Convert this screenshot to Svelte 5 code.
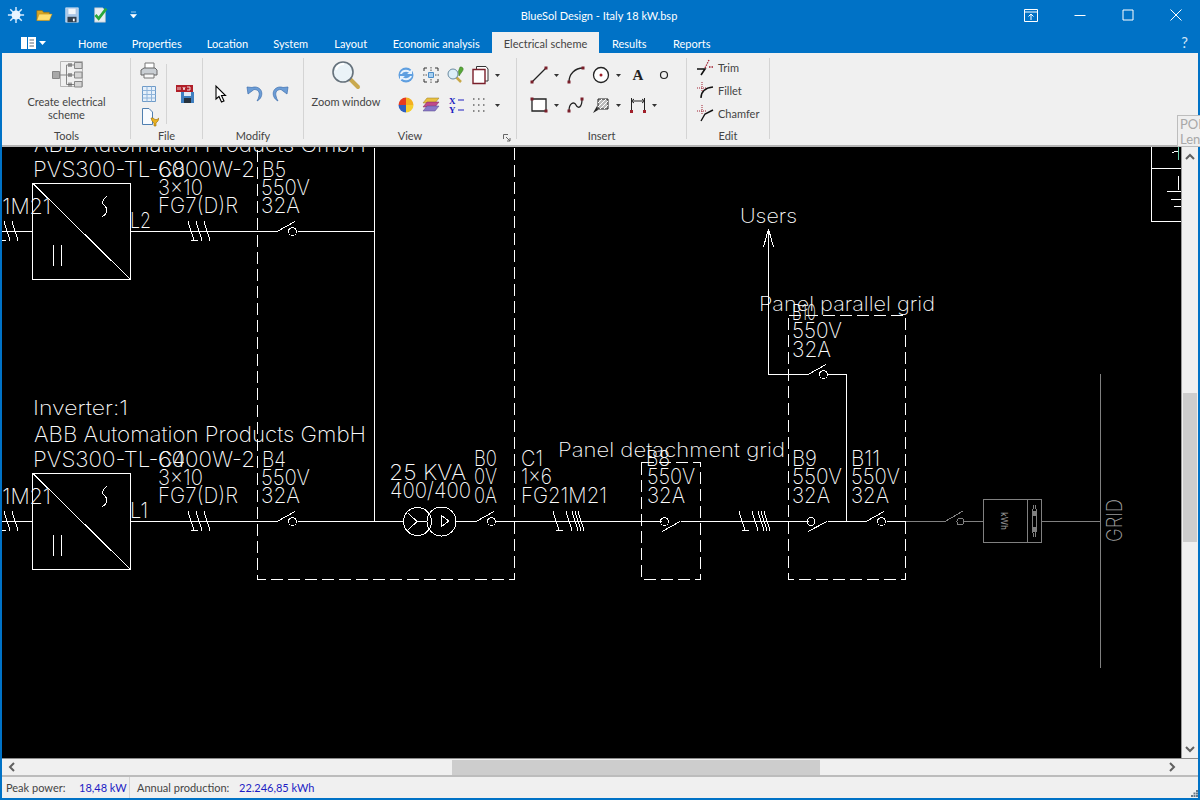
<script>
  const tabs = [
    { label: "Home", w: 52.5 },
    { label: "Properties", w: 75.5 },
    { label: "Location", w: 66 },
    { label: "System", w: 60.5 },
    { label: "Layout", w: 59.5 },
    { label: "Economic analysis", w: 111.5 },
    { label: "Electrical scheme", w: 107, active: true },
    { label: "Results", w: 60.5 },
    { label: "Reports", w: 64.5 },
  ];

  // x, baseline, width, font size, text (coordinates are page pixels)
  const labels = [
    [34, 152, 332, 21, "ABB Automation Products GmbH"],
    [33, 177, 222, 22, "PVS300-TL-6000W-2"],
    [158, 177, 27, 22, "C8"],
    [158, 195, 45, 22, "3x10"],
    [158, 213, 80, 22, "FG7(D)R"],
    [262, 177, 24, 22, "B5"],
    [261, 195, 49, 22, "550V"],
    [261, 213, 39, 22, "32A"],
    [-11, 214, 62, 22, "21M21"],
    [130, 228, 21, 22, "L2"],
    [33, 415, 95, 20, "Inverter:1"],
    [34, 442, 332, 21, "ABB Automation Products GmbH"],
    [33, 467, 222, 22, "PVS300-TL-6000W-2"],
    [158, 467, 27, 22, "C4"],
    [158, 485, 45, 22, "3x10"],
    [158, 503, 80, 22, "FG7(D)R"],
    [262, 467, 24, 22, "B4"],
    [261, 485, 49, 22, "550V"],
    [261, 503, 39, 22, "32A"],
    [-11, 504, 62, 22, "21M21"],
    [130, 518, 18, 22, "L1"],
    [389, 480, 77, 22, "25 KVA"],
    [390, 498, 81, 22, "400/400"],
    [474, 466, 23, 22, "B0"],
    [474, 484, 23, 22, "0V"],
    [474, 503, 23, 22, "0A"],
    [521, 466, 22, 22, "C1"],
    [521, 484, 31, 22, "1x6"],
    [521, 503, 86, 22, "FG21M21"],
    [558, 457, 227, 20, "Panel detachment grid"],
    [646, 466, 24, 22, "B8"],
    [647, 484, 48, 22, "550V"],
    [647, 503, 38, 22, "32A"],
    [792, 466, 25, 22, "B9"],
    [792, 484, 50, 22, "550V"],
    [792, 503, 38, 22, "32A"],
    [851, 466, 29, 22, "B11"],
    [851, 484, 49, 22, "550V"],
    [851, 503, 38, 22, "32A"],
    [740, 223, 57, 20, "Users"],
    [759, 311, 176, 20, "Panel parallel grid"],
    [792, 320, 24, 22, "B10"],
    [792, 338, 50, 22, "550V"],
    [792, 357, 39, 22, "32A"],
  ];

  // straight wires as x1 y1 x2 y2
  const wires = [
    [0, 231, 32, 231],
    [130, 231, 277, 231],
    [297, 231, 374, 231],
    [374, 147, 374, 521],
    [0, 521, 32, 521],
    [130, 521, 277, 521],
    [297, 521, 403, 521],
    [456, 521, 476, 521],
    [495, 521, 661, 521],
    [680, 521, 808, 521],
    [827, 521, 866, 521],
    [886, 521, 905, 521],
    [768, 230, 768, 374],
    [768, 374, 808, 374],
    [827, 374, 846, 374],
    [846, 374, 846, 521],
  ];

  const breakers = [
    { x: 277, y: 231 },
    { x: 277, y: 521 },
    { x: 476, y: 521 },
    { x: 808, y: 374 },
    { x: 866, y: 521 },
  ];

  const boxes = [32, 322];
  const cableTicks = [
    { x: 188, y: 231, offs: [0, 8, 16] },
    { x: 188, y: 521, offs: [0, 8, 16] },
    { x: -4, y: 231, offs: [0, 8, 16] },
    { x: -4, y: 521, offs: [0, 8, 16] },
    { x: 553, y: 521, offs: [0, 13, 19, 22, 25] },
    { x: 739, y: 521, offs: [0, 13, 19, 22, 25] },
  ];

  function tickPath(offs) {
    let d = "M3 9.5H10";
    for (const dx of offs) {
      d += `M${dx} -9.5L${dx + 6} 9.5`;
    }
    return d;
  }
</script>

<div class="window">
  <header class="titlebar">
    <div class="quick">
      <svg class="q" viewBox="0 0 20 20">
        <g stroke="#d8ecff" stroke-width="1.6"><path d="M10 1V19M1 10H19M3.6 3.6L16.4 16.4M16.4 3.6L3.6 16.4" /></g>
        <circle cx="10" cy="10" r="5" fill="#e9f4ff" />
      </svg>
      <svg class="q" viewBox="0 0 20 20">
        <path d="M2 5H8L9.5 7H16V16H2Z" fill="#d9a520" stroke="#8a6510" stroke-width=".6" />
        <path d="M4.5 9H19L16 16H2Z" fill="#ffdf70" stroke="#b58a20" stroke-width=".6" />
      </svg>
      <svg class="q" viewBox="0 0 20 20">
        <path d="M3 2H17V18H3Z" fill="#a9c6e6" stroke="#e4eef8" stroke-width=".7" />
        <path d="M6 3H14V9H6Z" fill="#f2f6fa" />
        <path d="M5 12H15V18H5Z" fill="#33404e" />
        <path d="M11 14H13V17H11Z" fill="#fff" />
      </svg>
      <svg class="q" viewBox="0 0 20 20">
        <path d="M4 2H13L16 5V18H4Z" fill="#e8eef3" stroke="#a8b8c4" stroke-width=".7" />
        <path d="M5 10L8.5 14L17 3" fill="none" stroke="#2aa83c" stroke-width="3" />
      </svg>
      <svg class="qmore" viewBox="0 0 7 8"><path d="M1 1H6M0.5 3.5H6.5L3.5 7Z" fill="#fff" stroke="#fff" stroke-width=".6" /></svg>
    </div>
    <div class="title">BlueSol Design - Italy 18 kW.bsp</div>
    <div class="controls">
      <svg viewBox="0 0 14 13" class="ctl-pin"><path d="M.5 .5H13.5V12.5H.5ZM.5 3H13.5M7 11V5M4.5 7.5L7 5L9.5 7.5" fill="none" stroke="#fff" /></svg>
      <svg viewBox="0 0 12 12" class="ctl"><path d="M.5 6.5H11.5" stroke="#fff" /></svg>
      <svg viewBox="0 0 12 12" class="ctl"><path d="M1 1H11V11H1Z" fill="none" stroke="#fff" /></svg>
      <svg viewBox="0 0 12 12" class="ctl"><path d="M.5 .5L11.5 11.5M11.5 .5L.5 11.5" stroke="#fff" /></svg>
    </div>
  </header>

  <nav class="tabs">
    <div class="filemenu">
      <svg viewBox="0 0 15 12" width="15" height="12">
        <path d="M0 0H15V12H0Z" fill="#fff" />
        <path d="M6.5 0V12" stroke="#0072c6" />
        <path d="M8.5 3H13M8.5 6H13M8.5 9H13" stroke="#5a6a78" />
      </svg>
      <svg viewBox="0 0 7 4" width="7" height="4"><path d="M0 0H7L3.5 4Z" fill="#fff" /></svg>
    </div>
    {#each tabs as tab}
      <div class="tab" class:active={tab.active} style={`width:${tab.w}px`}>{tab.label}</div>
    {/each}
    <div class="help">?</div>
  </nav>

  <section class="ribbon">
    <div class="group g-tools">
      <div class="body bigbtn">
        <svg viewBox="0 0 32 28" width="32" height="28" fill="none" stroke="#868686">
          <path d="M9.5 1.5H31.5V26.5H9.5Z" stroke="#b5b5b5" />
          <path d="M1.5 11.5H8.5V18.5H1.5Z" fill="#a8a8a8" />
          <path d="M8.5 15H23M15.5 5V24.5M15.5 5H23M15.5 24.5H23" />
          <path d="M23.5 2.5H31V8.5H23.5ZM23.5 12H31V18H23.5ZM23.5 21.5H31V27H23.5Z" fill="#d4d4d4" />
          <path d="M18 3V7M20 3V7M18 13V17M20 13V17M18 22.5V26.5M20 22.5V26.5" stroke="#555" />
        </svg>
        <span>Create electrical<br />scheme</span>
      </div>
      <div class="glabel">Tools</div>
    </div>

    <div class="group g-file">
      <div class="body filegrid">
        <div class="filecol">
          <svg class="ic" viewBox="0 0 20 20">
            <path d="M6 2H15V8H6Z" fill="#fff" stroke="#777" />
            <path d="M2 9L5 7H16L18 9V14H2Z" fill="#c9ced3" stroke="#666" />
            <path d="M5 13H15V17H5Z" fill="#f7f7f7" stroke="#777" />
          </svg>
          <svg class="ic" viewBox="0 0 20 20">
            <path d="M3.5 2.5H16.5V17.5H3.5Z" fill="#e6f0fa" stroke="#6f9bc8" />
            <path d="M3.5 6.5H16.5M3.5 10.5H16.5M3.5 14H16.5M8 2.5V17.5M12.5 2.5V17.5" stroke="#8fb4da" fill="none" />
          </svg>
          <svg class="ic" viewBox="0 0 20 20">
            <path d="M3.5 1.5H10L13.5 5V17.5H3.5Z" fill="#f8fbff" stroke="#4f7fb0" />
            <path d="M12 11L13 14L15 16V19H17V16L19 14L20 11L18 12.5L16 12.5L14 11Z" fill="#e8b020" stroke="#9a7008" stroke-width=".6" />
          </svg>
        </div>
        <div class="filesep"></div>
        <svg class="ic" viewBox="0 0 20 20">
          <path d="M1 1H18V8H1Z" fill="#b01e28" />
          <path d="M3 3V6M5 3V6M8 3L9 6L10 3M12 3H15V6H12" stroke="#fff" fill="none" stroke-width=".8" />
          <path d="M6 8H19V19H6Z" fill="#3f7fc0" />
          <path d="M9 8H16V12H9Z" fill="#dfeaf5" />
          <path d="M9 14H16V19H9Z" fill="#26323e" />
        </svg>
      </div>
      <div class="glabel">File</div>
    </div>

    <div class="group g-modify">
      <div class="body modrow">
        <svg class="ic" viewBox="0 0 20 20">
          <path d="M5 2V15L8 12.5L10.5 18L13 17L10.5 11.5H14.5Z" fill="#fff" stroke="#000" stroke-width="1.1" />
        </svg>
        <svg class="ic" viewBox="0 0 20 20">
          <path d="M3 3L4 10L10 5.5C14 5.5 16 8 15 12C14.5 14 14 15.5 13 17C17 15 18.5 11 17.5 7.5C16.5 4 12 2 8 3.5Z" fill="#6c9dd6" stroke="#3d6fae" stroke-width=".7" />
        </svg>
        <svg class="ic" viewBox="0 0 20 20">
          <path d="M17 3L16 10L10 5.5C6 5.5 4 8 5 12C5.5 14 6 15.5 7 17C3 15 1.5 11 2.5 7.5C3.5 4 8 2 12 3.5Z" fill="#6c9dd6" stroke="#3d6fae" stroke-width=".7" />
        </svg>
      </div>
      <div class="glabel">Modify</div>
    </div>

    <div class="group g-view">
      <div class="body viewbody">
        <div class="zoombtn">
          <svg viewBox="0 0 30 30" width="30" height="30">
            <path d="M18 18L27 27" stroke="#c9a94e" stroke-width="4" stroke-linecap="round" />
            <circle cx="12" cy="12" r="10" fill="#eaf3f8" stroke="#66727c" stroke-width="1.6" />
            <path d="M5 10C6 6 9 4 13 4" stroke="#fff" stroke-width="2" fill="none" />
          </svg>
          <span>Zoom window</span>
        </div>
        <div class="viewgrid">
          <svg class="ic" viewBox="0 0 20 20">
            <circle cx="10" cy="10" r="7.5" fill="#5f9fe0" />
            <path d="M4 9C5 5 10 3.500 14 6L16 4V9H11L13 7.500C10 6 7 7 6 9ZM16 11C15 15 10 16.500 6 14L4 16V11H9L7 12.500C10 14 13 13 14 11Z" fill="#e8f3fd" />
          </svg>
          <svg class="ic" viewBox="0 0 20 20">
            <path d="M3 6V3H6M14 3H17V6M17 14V17H14M6 17H3V14" stroke="#333" fill="none" />
            <path d="M7.500 7.500H12.500V12.500H7.500Z" fill="#a8d0f0" stroke="#4a8cc8" />
            <path d="M10 2V6M10 14V18M2 10H6M14 10H18" stroke="#555" stroke-dasharray="1.500 1" />
          </svg>
          <svg class="ic" viewBox="0 0 20 20">
            <path d="M10 12L15 17" stroke="#c8a848" stroke-width="2.500" />
            <circle cx="7" cy="9" r="5" fill="#dceef8" stroke="#6a8aa0" />
            <path d="M14 2C17 1.500 18 4 16.500 6L13 11L12.500 6Z" fill="#58a838" stroke="#357020" stroke-width=".5" />
          </svg>
          <svg class="ic" viewBox="0 0 20 20">
            <path d="M6.500 1.500H16L18 4V16H6.500Z" fill="#fff" stroke="#333" />
            <path d="M3 4.500H15V18.500H3Z" fill="#fff" stroke="#7a1f2a" stroke-width="1.400" />
          </svg>
          <svg class="arrow" viewBox="0 0 5 3"><path d="M0 0H5L2.500 3Z" fill="#333" /></svg>

          <svg class="ic" viewBox="0 0 20 20">
            <path d="M10 2.500A7.500 7.500 0 0 0 2.500 10H10Z" fill="#e63a20" />
            <path d="M10 2.500A7.500 7.500 0 0 1 17.500 10H10Z" fill="#f4b020" />
            <path d="M2.500 10A7.500 7.500 0 0 0 10 17.500V10Z" fill="#2f5fc0" />
            <path d="M17.500 10A7.500 7.500 0 0 1 10 17.500V10Z" fill="#f5cf30" />
          </svg>
          <svg class="ic" viewBox="0 0 20 20">
            <path d="M6 3H18L14 8H2Z" fill="#e8c040" stroke="#9a7a20" stroke-width=".5" />
            <path d="M6 7H18L14 12H2Z" fill="#c04a8a" stroke="#7a2a58" stroke-width=".5" />
            <path d="M6 11H18L14 16H2Z" fill="#8a78c8" stroke="#54488a" stroke-width=".5" />
          </svg>
          <svg class="ic" viewBox="0 0 20 20">
            <text x="3" y="9" class="xy">X</text>
            <text x="3" y="18" class="xy">Y</text>
            <path d="M12 5H18M12 15H18" stroke="#2020c0" />
          </svg>
          <svg class="ic" viewBox="0 0 20 20">
            <path d="M3 4H4.500M8 4H9.500M13 4H14.500M3 10H4.500M8 10H9.500M13 10H14.500M3 16H4.500M8 16H9.500M13 16H14.500" stroke="#666" stroke-width="1.500" />
          </svg>
          <svg class="arrow" viewBox="0 0 5 3"><path d="M0 0H5L2.500 3Z" fill="#333" /></svg>
        </div>
      </div>
      <div class="glabel">View</div>
      <svg class="launcher" viewBox="0 0 8 8"><path d="M.5 5V.5H5M3 3L7 7M7 4V7H4" fill="none" stroke="#666" /></svg>
    </div>

    <div class="group g-insert">
      <div class="body insertgrid">
        <svg class="ic" viewBox="0 0 20 20"><path d="M3 17L17 3" stroke="#222" stroke-width="1.300" /><path d="M1.500 15.500H4.500V18.500H1.500ZM15.500 1.500H18.500V4.500H15.500Z" fill="#7a1f2a" /></svg>
        <svg class="arrow" viewBox="0 0 5 3"><path d="M0 0H5L2.500 3Z" fill="#333" /></svg>
        <svg class="ic" viewBox="0 0 20 20"><path d="M3 17C3 9 9 3 17 3" fill="none" stroke="#222" stroke-width="1.300" /><path d="M1.500 15.500H4.500V18.500H1.500ZM15.500 1.500H18.500V4.500H15.500Z" fill="#7a1f2a" /></svg>
        <svg class="ic" viewBox="0 0 20 20"><circle cx="10" cy="10" r="7.500" fill="#fff" stroke="#222" stroke-width="1.300" /><circle cx="10" cy="10" r="1.500" fill="#a01f2a" /></svg>
        <svg class="arrow" viewBox="0 0 5 3"><path d="M0 0H5L2.500 3Z" fill="#333" /></svg>
        <div class="ins-a">A</div>
        <svg class="ic small" viewBox="0 0 20 20"><circle cx="10" cy="10" r="3.500" fill="none" stroke="#222" stroke-width="1.200" /></svg>

        <svg class="ic" viewBox="0 0 20 20"><path d="M3 4H17V16H3Z" fill="#fff" stroke="#222" stroke-width="1.300" /><path d="M1.500 2.500H4.500V5.500H1.500ZM15.500 14.500H18.500V17.500H15.500Z" fill="#7a1f2a" /></svg>
        <svg class="arrow" viewBox="0 0 5 3"><path d="M0 0H5L2.500 3Z" fill="#333" /></svg>
        <svg class="ic" viewBox="0 0 20 20"><path d="M3 16C3 8 8 6 10 10C12 14 16 13 16 4" fill="none" stroke="#222" stroke-width="1.300" /><path d="M1.500 14.500H4.500V17.500H1.500ZM14.500 2.500H17.500V5.500H14.500Z" fill="#7a1f2a" /></svg>
        <svg class="ic" viewBox="0 0 20 20">
          <path d="M7 4H17V14H7Z" fill="#bbb" stroke="#222" />
          <path d="M7 8L11 4M7 12L15 4M9 14L17 6M13 14L17 10" stroke="#fff" />
          <path d="M2 18L6 11L7 15Z" fill="#222" />
        </svg>
        <svg class="arrow" viewBox="0 0 5 3"><path d="M0 0H5L2.500 3Z" fill="#333" /></svg>
        <svg class="ic" viewBox="0 0 20 20"><path d="M3.500 3V16M16.500 3V16M3.500 6H16.500M6 4L3.500 6L6 8M14 4L16.500 6L14 8" fill="none" stroke="#222" /><path d="M2 15H5V18H2ZM15 15H18V18H15Z" fill="#a01f2a" /></svg>
        <svg class="arrow start" viewBox="0 0 5 3"><path d="M0 0H5L2.500 3Z" fill="#333" /></svg>
      </div>
      <div class="glabel">Insert</div>
    </div>

    <div class="group g-edit">
      <div class="body editlist">
        <div class="editrow">
          <svg class="ic" viewBox="0 0 20 20"><path d="M1 12H9L5 18" fill="none" stroke="#111" stroke-width="1.600" /><path d="M9 11L13 3M13 10H18" stroke="#a02030" stroke-dasharray="1.500 1" stroke-width="1.300" /></svg>
          <span>Trim</span>
        </div>
        <div class="editrow">
          <svg class="ic" viewBox="0 0 20 20"><path d="M5 18C5 12 8 8 17 7" fill="none" stroke="#111" stroke-width="1.400" /><path d="M1 8H11M6 2V12" stroke="#a02030" stroke-dasharray="1 1" /></svg>
          <span>Fillet</span>
        </div>
        <div class="editrow">
          <svg class="ic" viewBox="0 0 20 20"><path d="M5 18L9 11L17 7" fill="none" stroke="#111" stroke-width="1.400" /><path d="M1 8H11M6 2V12" stroke="#a02030" stroke-dasharray="1 1" /></svg>
          <span>Chamfer</span>
        </div>
      </div>
      <div class="glabel">Edit</div>
    </div>
  </section>

  <div class="workspace">
    <div class="canvas">
      <svg class="drawing" viewBox="2 147 1179 612" width="1179" height="612">
        <g stroke="#fff" fill="none" shape-rendering="crispEdges">
          {#each wires as w}
            <line x1={w[0] + 0.5} y1={w[1] + 0.5} x2={w[2] + 0.5} y2={w[3] + 0.5} />
          {/each}

          {#each boxes as top}
            <g transform={`translate(0 ${top - 322})`}>
              <rect x="32.5" y="473" width="98" height="96.500" />
              <path d="M33 473.500L130 569" />
              <path d="M107 486C101 491 102 494 105 496C108 499 108 503 102 507" />
              <path d="M53.500 535V556M61.500 535V556" />
            </g>
          {/each}

          {#each cableTicks as t}
            <path transform={`translate(${t.x} ${t.y})`} d={tickPath(t.offs)} />
          {/each}

          {#each breakers as b}
            <g transform={`translate(${b.x} ${b.y + 0.5})`}>
              <path d="M0 0L18 -10" />
              <circle cx="15.500" cy="0" r="4" />
            </g>
          {/each}

          <!-- B8 and B9 are drawn the other way up -->
          <g transform="translate(661 521.500)">
            <circle cx="3.500" cy="0" r="4" />
            <path d="M1 10L19 0" />
          </g>
          <g transform="translate(807 521.500)">
            <circle cx="4" cy="0" r="4" />
            <path d="M1 10L20 0" />
          </g>

          <circle cx="417.500" cy="521.500" r="14" />
          <circle cx="441.500" cy="521.500" r="14.500" />
          <path d="M408 513L417 521.500L408 530M417 521.500H427" />
          <path d="M441 515V527L449 521Z" />

          <path d="M768.500 229L763.500 247M768.500 229L773.500 247" />

          <rect x="257.500" y="133" width="257" height="446" stroke-dasharray="12 5" />
          <rect x="641.500" y="462.500" width="59" height="117" stroke-dasharray="12 5" />
          <rect x="788.500" y="315.500" width="117" height="264" stroke-dasharray="12 5" />

          <path d="M1151.500 147V221.500H1181M1151.500 168.500H1181M1178.500 176V190M1167 191.500H1181M1171 199.500H1181M1174 206.500H1181M1172 152.500L1178 151" />
          <path d="M1178.500 147V160" stroke="#6fd0b0" />
        </g>

        <g stroke="#808080" fill="none" shape-rendering="crispEdges">
          <path d="M906 521.500H945M964 521.500H983M1041.500 521.500H1100" />
          <path d="M945 521.500L963 511" />
          <circle cx="960.500" cy="521.500" r="3.500" />
          <rect x="983.500" y="499.500" width="58" height="43" />
          <path d="M1027.500 499.500V542.500" />
          <path d="M1100.500 374V668" />
          <path d="M1033.500 505C1032 515 1032 527 1033.500 537M1035.500 505C1037 515 1037 527 1035.500 537" />
          <path d="M1032.500 511H1036.500V515H1032.500ZM1032.500 527H1036.500V531H1032.500Z" fill="#808080" />
        </g>

        <g class="cad">
          {#each labels as l}
            <text x={l[0]} y={l[1]} font-size={l[3]} textLength={l[2]} lengthAdjust="spacingAndGlyphs">{l[4]}</text>
          {/each}
        </g>
        <g class="cad gray">
          <text transform="translate(1122 542) rotate(-90)" font-size="22" textLength="43" lengthAdjust="spacingAndGlyphs">GRID</text>
          <text class="meter" transform="translate(1001 512) rotate(90)" font-size="9" textLength="18" lengthAdjust="spacingAndGlyphs">kWh</text>
        </g>
      </svg>
    </div>

    <div class="vscroll">
      <svg class="chev" viewBox="0 0 10 7"><path d="M1 6L5 2L9 6" fill="none" stroke="#606060" stroke-width="2" /></svg>
      <div class="vtrack"><div class="vthumb"></div></div>
      <svg class="chev" viewBox="0 0 10 7"><path d="M1 1L5 5L9 1" fill="none" stroke="#606060" stroke-width="2" /></svg>
    </div>
  </div>

  <div class="hscroll">
    <svg class="chev-h" viewBox="0 0 7 10"><path d="M6 1L2 5L6 9" fill="none" stroke="#606060" stroke-width="2" /></svg>
    <div class="htrack"><div class="hthumb"></div></div>
    <svg class="chev-h" viewBox="0 0 7 10"><path d="M1 1L5 5L1 9" fill="none" stroke="#606060" stroke-width="2" /></svg>
  </div>

  <footer class="status">
    <div class="stat first"><span>Peak power:</span><b>18,48 kW</b></div>
    <div class="stat second"><span>Annual production:</span><b>22.246,85 kWh</b></div>
    <svg class="grip" viewBox="0 0 7 7"><path d="M5 0H7V2H5ZM2.500 2.500H4.500V4.500H2.500ZM5 2.500H7V4.500H5ZM0 5H2V7H0ZM2.500 5H4.500V7H2.500ZM5 5H7V7H5Z" fill="#6a7a88" /></svg>
  </footer>

  <div class="tip">
    <div>POL</div>
    <div>Len</div>
  </div>
</div>

<style>
  :global(body) {
    margin: 0;
    overflow: hidden;
  }

  .window {
    position: relative;
    width: 1200px;
    height: 800px;
    box-sizing: border-box;
    padding: 0 2px 2px;
    background: #0072c6;
    display: flex;
    flex-direction: column;
    overflow: hidden;
    font-family: Lato, "Open Sans", sans-serif;
    font-size: 11px;
    color: #444;
  }

  .titlebar {
    height: 30px;
    flex: none;
    display: flex;
    align-items: center;
    position: relative;
    color: #fff;
  }

  .quick {
    display: flex;
    align-items: center;
    padding-left: 5px;
    gap: 10px;
  }

  .q {
    width: 18px;
    height: 18px;
  }

  .qmore {
    width: 7px;
    height: 8px;
    margin-left: 11px;
  }

  .title {
    position: absolute;
    left: 0;
    right: 2px;
    top: 8px;
    text-align: center;
    line-height: 15px;
  }

  .controls {
    margin-left: auto;
    display: flex;
    align-items: center;
    padding-right: 16px;
  }

  .ctl-pin {
    width: 14px;
    height: 13px;
  }

  .ctl {
    width: 12px;
    height: 12px;
    margin-left: 36px;
  }

  .tabs {
    height: 23px;
    flex: none;
    display: flex;
    color: #fff;
  }

  .filemenu {
    width: 64.500px;
    flex: none;
    display: flex;
    align-items: center;
    gap: 3px;
    padding: 2px 0 0 19px;
    box-sizing: border-box;
  }

  .tab {
    flex: none;
    text-align: center;
    line-height: 15px;
    padding-top: 6px;
    box-sizing: border-box;
  }

  .tab.active {
    background: #f0f0f0;
    color: #444;
    margin-top: 2px;
    padding-top: 4px;
  }

  .help {
    margin-left: auto;
    margin-right: 10px;
    font-size: 15px;
    line-height: 24px;
    color: #cfe4f5;
  }

  .ribbon {
    height: 94px;
    flex: none;
    box-sizing: border-box;
    display: flex;
    background: #f0f0f0;
    border-bottom: 2px solid #b4b4b4;
    padding-left: 1px;
  }

  .group {
    position: relative;
    flex: none;
    margin: 5px 0 6px;
    border-right: 1px solid #d4d4d4;
    display: flex;
    flex-direction: column;
    box-sizing: border-box;
  }

  .body {
    flex: 1;
    min-height: 0;
  }

  .glabel {
    text-align: center;
    line-height: 14px;
    height: 14px;
    margin-bottom: -4px;
  }

  .g-tools {
    width: 128px;
  }

  .g-file {
    width: 72px;
  }

  .g-modify {
    width: 101px;
  }

  .g-view {
    width: 213px;
  }

  .g-insert {
    width: 170px;
  }

  .g-edit {
    width: 83px;
  }

  .ic {
    width: 20px;
    height: 20px;
    display: block;
  }

  .arrow {
    width: 5px;
    height: 3px;
  }

  .arrow.start {
    justify-self: start;
  }

  .bigbtn {
    display: flex;
    flex-direction: column;
    align-items: center;
    padding-top: 2px;
    text-align: center;
    line-height: 13px;
  }

  .bigbtn span {
    margin-top: 7px;
  }

  .filegrid {
    display: flex;
    align-items: center;
    padding-left: 8px;
  }

  .filecol {
    display: flex;
    flex-direction: column;
    gap: 3px;
  }

  .filesep {
    width: 1px;
    height: 60px;
    background: #d4d4d4;
    margin: 0 8px 0 7px;
  }

  .modrow {
    display: flex;
    align-items: center;
    padding-left: 8px;
    gap: 7px;
  }

  .modrow .ic:first-child {
    margin-right: 6px;
  }

  .viewbody {
    display: flex;
  }

  .zoombtn {
    width: 84px;
    flex: none;
    display: flex;
    flex-direction: column;
    align-items: center;
    padding-top: 2px;
  }

  .zoombtn span {
    margin-top: 5px;
    line-height: 14px;
  }

  .viewgrid {
    display: grid;
    grid-template-columns: 24px 25px 25px 23px 12px;
    grid-auto-rows: 30px;
    align-items: center;
    justify-items: center;
    padding-top: 2px;
    margin-left: 6px;
  }

  .xy {
    font: bold 9px "Liberation Serif", serif;
    fill: #2020c0;
  }

  .launcher {
    position: absolute;
    right: 5px;
    bottom: -3px;
    width: 8px;
    height: 8px;
  }

  .insertgrid {
    display: grid;
    grid-template-columns: 22px 12px 28px 22px 12px 28px 24px;
    grid-auto-rows: 30px;
    align-items: center;
    justify-items: center;
    padding: 2px 0 0 11px;
  }

  .ins-a {
    font: bold 15px "Liberation Serif", serif;
    color: #222;
  }

  .editlist {
    display: flex;
    flex-direction: column;
    gap: 3px;
    padding: 0 0 0 9px;
    margin-top: -1px;
  }

  .editrow {
    display: flex;
    align-items: center;
    height: 20px;
    gap: 2px;
  }

  .workspace {
    flex: 1;
    min-height: 0;
    display: flex;
  }

  .canvas {
    width: 1179px;
    flex: none;
    background: #000;
    overflow: hidden;
  }

  .drawing {
    display: block;
  }

  .cad {
    fill: #fff;
    opacity: 0.99;
    font-family: Inter, "Liberation Sans", sans-serif;
    font-weight: 200;
  }

  .cad.gray {
    fill: #a0a0a0;
  }

  .meter {
    font-weight: 400;
  }

  .vscroll {
    flex: 1;
    display: flex;
    flex-direction: column;
    align-items: center;
    background: #f0f0f0;
    border-left: 1px solid #9a9a9a;
    padding: 6px 0 5px;
    box-sizing: border-box;
  }

  .chev {
    width: 10px;
    height: 7px;
    flex: none;
  }

  .vtrack {
    flex: 1;
    align-self: stretch;
    padding: 233px 1px 0;
  }

  .vthumb {
    height: 149px;
    background: #cdcdcd;
  }

  .hscroll {
    height: 19px;
    flex: none;
    display: flex;
    align-items: center;
    box-sizing: border-box;
    background: #f0f0f0;
    border-top: 1px solid #8c8c8c;
    border-bottom: 2px solid #bcbcbc;
    padding: 0 22px 0 6px;
  }

  .chev-h {
    width: 7px;
    height: 10px;
    flex: none;
  }

  .htrack {
    flex: 1;
    align-self: stretch;
    padding: 1px 0 0 437px;
  }

  .hthumb {
    width: 368px;
    height: 15px;
    background: #cdcdcd;
  }

  .status {
    height: 21px;
    flex: none;
    display: flex;
    align-items: center;
    background: #f0f0f0;
    position: relative;
  }

  .stat {
    display: flex;
    height: 100%;
    align-items: center;
    white-space: nowrap;
  }

  .stat span {
    flex: none;
  }

  .stat.first {
    width: 128px;
    box-sizing: border-box;
    padding-left: 4px;
    border-right: 1px solid #d4d4d4;
  }

  .stat.first span {
    width: 73px;
  }

  .stat.second {
    padding-left: 7px;
  }

  .stat.second span {
    width: 102px;
  }

  .stat b {
    font-weight: 400;
    color: #1c1cc4;
  }

  .grip {
    width: 7px;
    height: 7px;
    margin: auto 0 1px auto;
  }

  .tip {
    position: absolute;
    left: 1177px;
    top: 115px;
    width: 30px;
    height: 32px;
    box-sizing: border-box;
    border: 1px solid #bdbdbd;
    background: #efefef;
    color: #a8a8a8;
    font-size: 13px;
    line-height: 15px;
    padding: 1px 2px;
  }
</style>
